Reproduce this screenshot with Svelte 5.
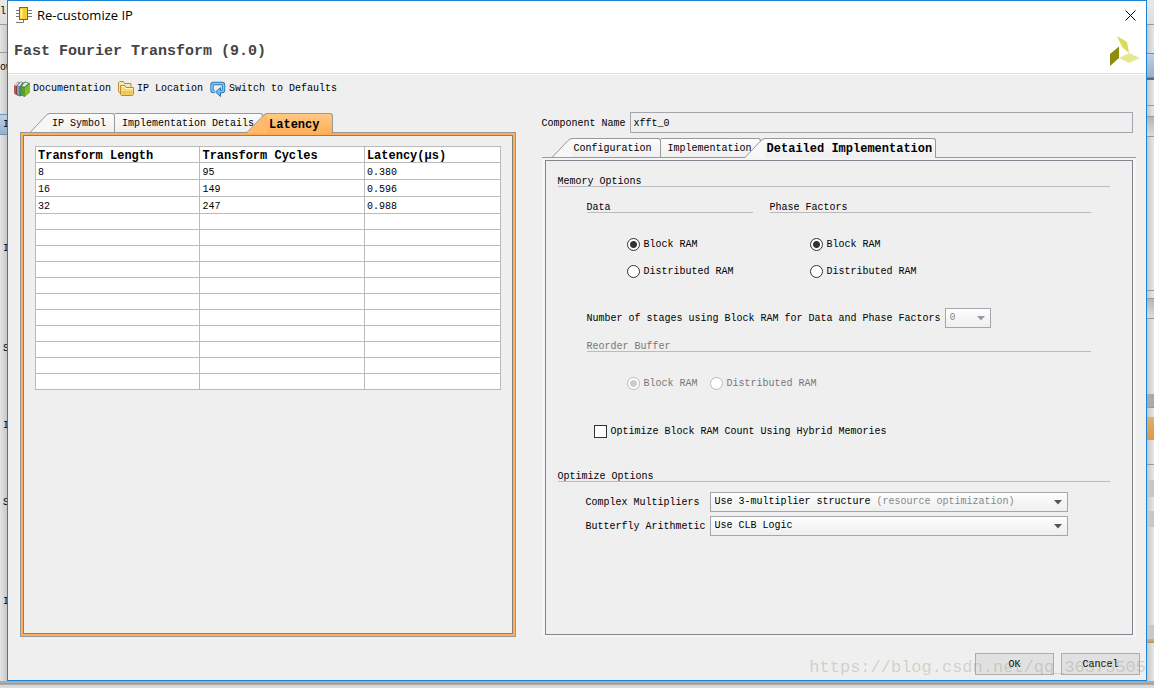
<script>
  const toolbar = [
    { icon: 'books', label: 'Documentation' },
    { icon: 'folder', label: 'IP Location' },
    { icon: 'reset', label: 'Switch to Defaults' }
  ];

  const previewTabs = ['IP Symbol', 'Implementation Details', 'Latency'];
  const configTabs = ['Configuration', 'Implementation', 'Detailed Implementation'];

  const columns = ['Transform Length', 'Transform Cycles', 'Latency(μs)'];
  const rows = [
    ['8', '95', '0.380'],
    ['16', '149', '0.596'],
    ['32', '247', '0.988']
  ];
  const emptyRows = Array(11).fill(0);

  const memoryTypes = ['Block RAM', 'Distributed RAM'];

  let componentName = $state('xfft_0');
  let dataMemory = $state('Block RAM');
  let phaseMemory = $state('Block RAM');
  let reorderMemory = $state('Block RAM');
  let hybrid = $state(false);
  let stages = $state('0');
  let multipliers = $state('Use 3-multiplier structure');
  let butterfly = $state('Use CLB Logic');

  // slices of the main window visible on both sides of the dialog
  const leftEdge = [
    { h: 24, kind: 'light', text: 'l' },
    { h: 28, kind: 'line' },
    { h: 30, kind: 'line', text: 'ow' },
    { h: 32, kind: 'plain' },
    { h: 21, kind: 'blue', text: 'I' },
    { h: 104, kind: 'plain' },
    { h: 20, kind: 'plain', text: 'I' },
    { h: 80, kind: 'plain' },
    { h: 20, kind: 'plain', text: 'S' },
    { h: 57, kind: 'plain' },
    { h: 20, kind: 'plain', text: 'I' },
    { h: 57, kind: 'plain' },
    { h: 20, kind: 'plain', text: 'S' },
    { h: 79, kind: 'plain' },
    { h: 20, kind: 'plain', text: 'I' },
    { h: 67, kind: 'plain' }
  ];

  const rightEdge = [
    { h: 24, kind: 'light' },
    { h: 29, kind: 'line' },
    { h: 25, kind: 'blue' },
    { h: 27, kind: 'dark-line' },
    { h: 11, kind: 'line' },
    { h: 20, kind: 'fade' },
    { h: 154, kind: 'line' },
    { h: 8, kind: 'line' },
    { h: 20, kind: 'fade' },
    { h: 76, kind: 'line' },
    { h: 13, kind: 'grey' },
    { h: 10, kind: 'line' },
    { h: 23, kind: 'orange' },
    { h: 24, kind: 'plain' },
    { h: 16, kind: 'line' },
    { h: 17, kind: 'grey-light' },
    { h: 14, kind: 'plain' },
    { h: 16, kind: 'grey-light' },
    { h: 98, kind: 'plain' },
    { h: 14, kind: 'grey-light' },
    { h: 3, kind: 'orange' },
    { h: 24, kind: 'line' }
  ];
</script>

{#snippet icon(name)}
  {#if name === 'books'}
    <svg class="icon" viewBox="0 0 16 16" aria-hidden="true">
      <path d="M0 4.500L4 0.500l2 1v12l-2 1.500L0 12z" fill="#8e3b34" />
      <path d="M0 4.500L2 6v8L0 12z" fill="#c0574a" />
      <path d="M3 4.500L7 .5l2.500 1v12L6 15.500l-3-2.500z" fill="#2f628f" />
      <path d="M3 4.500L5.500 6v9L3 13z" fill="#6fa3cb" />
      <path d="M.6 4.300L4 .9l1.200.6L2 5.300zM3.600 4.300L7 1l1.600.7L5.400 5.400z" fill="#e4e8ea" />
      <path d="M6.500 5L11 .5l5 1.700V11l-5.500 5-4-2.500z" fill="#3c7a26" />
      <path d="M10.500 7L16 2.300V11l-5.500 5z" fill="#7fbf2f" />
      <path d="M7.300 4.900L11.200 1l3.700 1.300-4.500 3.800z" fill="#e5e9e1" stroke="#557a46" stroke-width=".5" />
      <path d="M6.500 5l4 2v9l-4-2.500z" fill="#58a032" />
    </svg>
  {:else if name === 'folder'}
    <svg class="icon" viewBox="0 0 16 16" aria-hidden="true">
      <path d="M.5 1.500L1.500 .5h4l1 2h6.500v10H2.500l-2-2z" fill="#f6e8b4" stroke="#b58c31" />
      <path d="M2.500 13.500v-9h4.500l1 2h7.500v7l-1 1h-11z" fill="#f8d878" stroke="#b58c31" />
      <path d="M3.500 10h11v3.500h-11z" fill="#f3c54f" />
      <path d="M3.500 5.500h3l1 2h7" fill="none" stroke="#fff8d5" />
    </svg>
  {:else}
    <svg class="icon" viewBox="0 0 16 16" aria-hidden="true">
      <path
        d="M4.500 10.500H3.500Q2 10.500 2 9V4Q2 2.500 3.500 2.500h8.500q1.500 0 1.500 1.500v5q0 1.500-1.500 1.500h-2"
        fill="none"
        stroke="#2f78ba"
        stroke-width="3.400"
      />
      <path d="M10.500 6.500v9L5.500 11z" fill="#64b5f2" stroke="#2f78ba" />
      <path
        d="M4 10.500H3.500Q2 10.500 2 9V4Q2 2.500 3.500 2.500h8.500q1.500 0 1.500 1.500v5q0 1.500-1.500 1.500H9"
        fill="none"
        stroke="#84c9fa"
        stroke-width="1.500"
      />
    </svg>
  {/if}
{/snippet}

{#snippet tabs(items, label, accent)}
  <div class="tabs" class:accent role="tablist" aria-label={label}>
    {#each items as item, i}
      {@const active = i === items.length - 1}
      <button class="tab" class:active class:slanted={i !== 1} role="tab" aria-selected={active}>
        {#if i !== 1}
          <svg class="slope" viewBox="0 0 20 20" aria-hidden="true">
            <path class="slope-fill" d="M0 20L1 19 17 2 20 1V20z" />
            <path class="slope-line" d="M0 19.500L16 2.500Q18 .5 20 .5" />
          </svg>
        {/if}
        <span class="tab-text">{item}</span>
      </button>
    {/each}
  </div>
{/snippet}

{#snippet edge(side, pieces)}
  <div class="edge {side}" aria-hidden="true">
    {#each pieces as piece}
      <div class="piece {piece.kind}" style="height: {piece.h}px">{piece.text ?? ''}</div>
    {/each}
  </div>
{/snippet}

{#snippet arrow()}
  <svg class="arrow" viewBox="0 0 8 5" aria-hidden="true"><path d="M0 0h8L4 4.500z" /></svg>
{/snippet}

<div class="desktop">
  {@render edge('left', leftEdge)}

  <div class="dialog" role="dialog" aria-labelledby="dialog-title">
    <header>
      <div class="titlebar">
        <svg class="icon" viewBox="0 0 16 16" aria-hidden="true">
          <path
            d="M0 3.500h4M0 6.500h4M0 9.500h4M12 3.500h4M12 6.500h4M12 9.500h4M0 15.500h7.500V13"
            fill="none"
            stroke="#777"
          />
          <rect x="3.500" y=".5" width="8" height="12" fill="#f7ce2e" stroke="#8a6410" />
          <path d="M5.500 2v9" stroke="#fff3a3" stroke-width="2" />
        </svg>
        <span id="dialog-title">Re-customize IP</span>
        <button class="close" aria-label="Close">
          <svg viewBox="0 0 11 11" aria-hidden="true"><path d="M.5.5l10 10M10.500.5l-10 10" /></svg>
        </button>
      </div>
      <div class="heading">
        <h1>Fast Fourier Transform (9.0)</h1>
        <svg class="logo" viewBox="0 0 30 30" aria-hidden="true">
          <path d="M7 0l10 6 2 11-7-6z" fill="#d9dc55" />
          <path d="M0 18l9-7.500V22L0 30z" fill="#8b8d0b" />
          <path d="M9 22l10-5 11 5-11 5z" fill="#e5e893" />
        </svg>
      </div>
    </header>

    <nav class="toolbar">
      {#each toolbar as item}
        <button>{@render icon(item.icon)}{item.label}</button>
      {/each}
    </nav>

    <main>
      <section class="preview">
        {@render tabs(previewTabs, 'Preview', true)}
        <div class="preview-panel">
          <table>
            <colgroup><col class="wide" /><col class="wide" /><col /></colgroup>
            <thead>
              <tr>
                {#each columns as column}<th>{column}</th>{/each}
              </tr>
            </thead>
            <tbody>
              {#each rows as row}
                <tr class="filled">
                  {#each row as cell}<td>{cell}</td>{/each}
                </tr>
              {/each}
              {#each emptyRows as _}
                <tr><td></td><td></td><td></td></tr>
              {/each}
            </tbody>
          </table>
        </div>
      </section>

      <section class="settings">
        <div class="name-row">
          <label for="component-name">Component Name</label>
          <input id="component-name" type="text" bind:value={componentName} />
        </div>
        {@render tabs(configTabs, 'Settings', false)}
        <div class="settings-frame">
          <div class="settings-panel">
            <h2>Memory Options</h2>
            <div class="memory">
              <div class="memory-groups">
                <fieldset class="data">
                  <legend>Data</legend>
                  <div class="radios">
                    {#each memoryTypes as type}
                      <label>
                        <input type="radio" name="data" value={type} bind:group={dataMemory} />{type}
                      </label>
                    {/each}
                  </div>
                </fieldset>
                <fieldset class="phase">
                  <legend>Phase Factors</legend>
                  <div class="radios">
                    {#each memoryTypes as type}
                      <label>
                        <input type="radio" name="phase" value={type} bind:group={phaseMemory} />{type}
                      </label>
                    {/each}
                  </div>
                </fieldset>
              </div>

              <div class="stages">
                <label for="stages">Number of stages using Block RAM for Data and Phase Factors</label>
                <div class="select small">
                  <select id="stages" bind:value={stages} disabled>
                    <option>0</option>
                  </select>
                  {@render arrow()}
                </div>
              </div>

              <fieldset class="reorder" disabled>
                <legend>Reorder Buffer</legend>
                <div class="radios inline">
                  {#each memoryTypes as type}
                    <label>
                      <input type="radio" name="reorder" value={type} bind:group={reorderMemory} />{type}
                    </label>
                  {/each}
                </div>
              </fieldset>
            </div>

            <label class="hybrid">
              <input type="checkbox" bind:checked={hybrid} />Optimize Block RAM Count Using Hybrid Memories
            </label>

            <h2>Optimize Options</h2>
            <div class="optimize">
              <label for="multipliers">Complex Multipliers</label>
              <div class="select">
                <select id="multipliers" bind:value={multipliers}>
                  <option>Use 3-multiplier structure</option>
                </select>
                <span class="hint">(resource optimization)</span>
                {@render arrow()}
              </div>
              <label for="butterfly">Butterfly Arithmetic</label>
              <div class="select">
                <select id="butterfly" bind:value={butterfly}>
                  <option>Use CLB Logic</option>
                </select>
                {@render arrow()}
              </div>
            </div>
          </div>
        </div>
      </section>
    </main>

    <footer>
      <button>OK</button>
      <button>Cancel</button>
      <span class="watermark">https://blog.csdn.net/qq_36375505</span>
    </footer>
  </div>

  {@render edge('right', rightEdge)}
</div>

<style>
  :global(body) {
    margin: 0;
  }

  .desktop {
    box-sizing: border-box;
    display: flex;
    min-height: 100vh;
    padding-bottom: 7px;
    background: linear-gradient(to top, #ddd 0, #d4d4d4 3px, #888 4px, #b0b0b0 5px, #a4a4a4 7px, #ddd 8px);
    font-family: 'Liberation Mono', monospace;
    font-size: 10px;
    line-height: 12px;
    color: #000;
  }

  button,
  input,
  select {
    box-sizing: border-box;
    margin: 0;
    font: inherit;
    color: inherit;
  }

  .edge {
    display: flex;
    flex-direction: column;
    flex: 0 0 7px;
    width: 7px;
    overflow: hidden;
    background: linear-gradient(to right, #e4e4e4, #c8c8c8);
  }

  .edge.right {
    background: linear-gradient(to left, #e6e6e6, #c8c8c8);
  }

  .piece {
    box-sizing: border-box;
    display: flex;
    align-items: center;
    justify-content: flex-start;
    overflow: hidden;
  }

  .left .piece.plain,
  .left .piece.blue {
    padding-left: 3px;
  }

  .piece.light {
    background: linear-gradient(#e8e8e8, #dedede);
  }

  .piece.line {
    border-top: 1px solid #999;
  }

  .piece.dark-line {
    border-top: 2px solid #666;
  }

  .piece.blue {
    border: solid #6c8fb5;
    border-width: 1px 0;
    background: linear-gradient(#bdd0e5, #98b0cb);
  }

  .piece.fade {
    border-top: 1px solid #999;
    background: linear-gradient(#b4b4b4, #dcdcdc);
  }

  .piece.grey {
    background: #aaa;
  }

  .piece.grey-light {
    background: #c8c8c8;
  }

  .piece.orange {
    background: linear-gradient(#deb06a, #e39645);
  }

  .dialog {
    display: flex;
    flex-direction: column;
    flex: 1;
    min-width: 0;
    border: 1px solid #1883d7;
    background: #efefef;
  }

  header {
    border-bottom: 1px solid #ddd;
    background: #fff;
  }

  .icon {
    width: 16px;
    height: 16px;
    flex: none;
  }

  .titlebar {
    display: flex;
    align-items: center;
    gap: 5px;
    height: 28px;
    padding: 0 10px 0 8px;
    font-family: 'Open Sans', sans-serif;
    font-size: 13px;
  }

  .close {
    display: flex;
    margin-left: auto;
    padding: 0;
    border: 0;
    background: none;
  }

  .close svg {
    width: 11px;
    height: 11px;
    fill: none;
    stroke: #000;
  }

  .heading {
    display: flex;
    align-items: center;
    justify-content: space-between;
    height: 44px;
    padding: 0 6px;
  }

  h1 {
    margin: 0;
    padding-top: 2px;
    font-size: 15px;
    line-height: 20px;
    color: #444;
  }

  .logo {
    width: 30px;
    height: 30px;
  }

  .toolbar {
    display: flex;
    align-items: center;
    gap: 7px;
    height: 28px;
    padding: 0 6px;
    border-top: 1px solid #fff;
    box-sizing: border-box;
  }

  .toolbar button {
    display: flex;
    align-items: center;
    gap: 3px;
    padding: 0;
    border: 0;
    background: none;
  }

  main {
    display: flex;
    flex: 1;
    gap: 26px;
    padding: 0 10px 0 12px;
  }

  .preview,
  .settings {
    display: flex;
    flex-direction: column;
    min-width: 0;
  }

  .preview {
    flex: 496 1 0;
    padding-top: 11px;
  }

  .settings {
    flex: 595 1 0;
    padding-top: 10px;
  }

  .tabs {
    display: flex;
    align-items: flex-start;
    height: 19px;
    padding-left: 10px;
  }

  .tab {
    display: flex;
    height: 19px;
    padding: 0;
    border: 0;
    background: none;
    white-space: nowrap;
  }

  .tab-text {
    box-sizing: border-box;
    display: flex;
    align-items: center;
    height: 100%;
    padding: 2px 8px 0 7px;
    border: solid #999;
    border-width: 1px 1px 0 0;
    border-radius: 0 3px 0 0;
    background: linear-gradient(#fcfcfc, #efefef);
  }

  .slanted .tab-text {
    padding-left: 2px;
  }

  .slope {
    flex: none;
    width: 20px;
    height: 20px;
  }

  .slope-fill {
    fill: #f7f7f7;
  }

  .slope-line {
    fill: none;
    stroke: #999;
  }

  .tab.active {
    position: relative;
    z-index: 1;
    height: 20px;
    margin-left: -16px;
    font-size: 12px;
    font-weight: bold;
  }

  .active .tab-text {
    padding: 1px 3px 0 2px;
  }

  .accent .tab.active {
    height: 21px;
  }

  .accent .active .tab-text {
    padding-right: 13px;
    background: linear-gradient(#ffc985, #ffad56);
  }

  .accent .active .slope-fill {
    fill: #ffb96a;
  }

  .preview-panel {
    flex: 1;
    padding: 13px 14px;
    border: 1px solid #999;
    box-shadow:
      inset 0 0 0 2px #ffad56,
      inset 0 0 0 3px #808080;
  }

  table {
    width: 100%;
    table-layout: fixed;
    border-collapse: collapse;
    background: #fff;
  }

  .wide {
    width: 35.4%;
  }

  th,
  td {
    height: 16px;
    box-sizing: border-box;
    padding: 0 3px;
    border: 1px solid #bbb;
    text-align: left;
  }

  th {
    padding: 4px 2px 0;
    font-size: 12px;
    line-height: 11px;
  }

  .filled td {
    height: 17px;
    padding: 4px 3px 0 2px;
  }

  .name-row {
    display: flex;
    align-items: center;
    gap: 4px;
    margin-bottom: 5px;
    padding-right: 3px;
  }

  .name-row label {
    padding-top: 2px;
  }

  .name-row input {
    flex: 1;
    min-width: 0;
    height: 21px;
    padding: 2px 3px 0;
    border: 1px solid #a5a5ad;
    background: #efefef;
  }

  .settings-frame {
    display: flex;
    flex: 1;
    padding: 2px 3px;
    border-top: 1px solid #999;
    background: #f5f5f5;
  }

  .settings-panel {
    flex: 1;
    min-width: 0;
    padding: 14px 22px 14px 12px;
    border: 1px solid #84848f;
    background: #efefef;
  }

  h2,
  legend {
    box-sizing: border-box;
    width: 100%;
    height: 12px;
    margin: 0;
    padding: 0;
    border-bottom: 1px solid #bbb;
    font-size: 10px;
    font-weight: normal;
    line-height: 14px;
  }

  fieldset {
    min-width: 0;
    margin: 0;
    padding: 0;
    border: 0;
  }

  .memory {
    padding: 14px 19px 0 29px;
  }

  .memory-groups {
    display: flex;
    gap: 17px;
  }

  .data {
    flex: 0 0 166px;
  }

  .phase {
    flex: 1;
  }

  .radios {
    display: flex;
    flex-direction: column;
    gap: 14px;
    padding: 25px 0 0 40px;
  }

  .radios label,
  .hybrid {
    display: flex;
    align-items: center;
    gap: 4px;
    height: 13px;
    white-space: nowrap;
  }

  .radios.inline {
    flex-direction: row;
    gap: 12px;
  }

  input[type='radio'],
  input[type='checkbox'] {
    appearance: none;
    flex: none;
    width: 13px;
    height: 13px;
    border: 1px solid #333;
    background: #fff;
  }

  input[type='radio'] {
    border-radius: 50%;
  }

  input[type='radio']:checked {
    background: radial-gradient(circle, #333 3px, #fff 4px);
  }

  input[type='checkbox']:checked {
    box-shadow: inset 0 0 0 2px #fff;
    background: #333;
  }

  .reorder {
    color: #777;
  }

  .reorder input[type='radio'] {
    border-color: #bbb;
  }

  .reorder input[type='radio']:checked {
    background: radial-gradient(circle, #ccc 3px, #fff 4px);
  }

  .stages {
    display: flex;
    align-items: center;
    gap: 4px;
    padding: 30px 0 12px;
    white-space: nowrap;
  }

  .stages label,
  .optimize label {
    padding-top: 2px;
  }

  .select {
    position: relative;
    display: flex;
  }

  .select.small {
    width: 46px;
  }

  select {
    appearance: none;
    width: 100%;
    height: 20px;
    padding: 0 4px;
    border: 1px solid #a5a5ad;
    border-radius: 0;
    background: linear-gradient(#fdfdfd, #efefef);
  }

  select:disabled {
    color: #888;
    opacity: 1;
  }

  .arrow {
    position: absolute;
    top: 8px;
    right: 6px;
    width: 8px;
    height: 5px;
    fill: #555;
    pointer-events: none;
  }

  .small .arrow {
    fill: #999;
  }

  .hint {
    position: absolute;
    top: 4px;
    left: calc(5px + 27ch);
    color: #888;
    pointer-events: none;
  }

  .hybrid {
    margin: 35px 0 32px 36px;
  }

  .optimize {
    display: grid;
    grid-template-columns: auto 1fr;
    align-items: center;
    gap: 4px;
    padding: 10px 42px 0 28px;
  }

  footer {
    position: relative;
    display: flex;
    justify-content: flex-end;
    gap: 7px;
    padding: 16px 6px 5px;
  }

  footer button {
    width: 79px;
    height: 22px;
    padding: 2px 0 0;
    border: 1px solid #adadad;
    background: #e1e1e1;
  }

  .watermark {
    position: absolute;
    right: 0;
    bottom: 2px;
    font-size: 17px;
    line-height: 20px;
    color: rgba(150, 150, 130, 0.35);
    pointer-events: none;
  }
</style>
